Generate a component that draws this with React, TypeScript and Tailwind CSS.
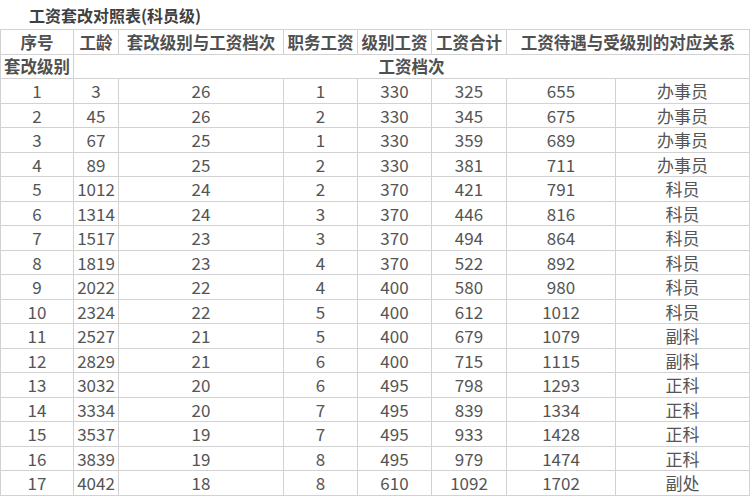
const rows: [number, string, number, number, number, number, number, string][] = [
  [1, "3", 26, 1, 330, 325, 655, "办事员"],
  [2, "45", 26, 2, 330, 345, 675, "办事员"],
  [3, "67", 25, 1, 330, 359, 689, "办事员"],
  [4, "89", 25, 2, 330, 381, 711, "办事员"],
  [5, "1012", 24, 2, 370, 421, 791, "科员"],
  [6, "1314", 24, 3, 370, 446, 816, "科员"],
  [7, "1517", 23, 3, 370, 494, 864, "科员"],
  [8, "1819", 23, 4, 370, 522, 892, "科员"],
  [9, "2022", 22, 4, 400, 580, 980, "科员"],
  [10, "2324", 22, 5, 400, 612, 1012, "科员"],
  [11, "2527", 21, 5, 400, 679, 1079, "副科"],
  [12, "2829", 21, 6, 400, 715, 1115, "副科"],
  [13, "3032", 20, 6, 495, 798, 1293, "正科"],
  [14, "3334", 20, 7, 495, 839, 1334, "正科"],
  [15, "3537", 19, 7, 495, 933, 1428, "正科"],
  [16, "3839", 19, 8, 495, 979, 1474, "正科"],
  [17, "4042", 18, 8, 610, 1092, 1702, "副处"],
];

const widths = [73, 45, 165, 74, 74, 75, 109, 134];
const cell = "border border-[#d2d2d2] p-0 text-center whitespace-nowrap";

export default function App() {
  return (
    <div
      className="h-[500px] w-[753px] overflow-hidden bg-white text-[#555]"
      style={{ fontFamily: '"Noto Sans CJK SC", "Noto Sans", sans-serif' }}
    >
      <div className="flex h-[29px] items-center pl-[29px] text-[16px] font-bold leading-none text-[#404040]">
        工资套改对照表(科员级)
      </div>
      <table className="w-[749px] table-fixed border-collapse text-[17px] leading-none">
        <colgroup>
          {widths.map((w, i) => (
            <col key={i} style={{ width: w }} />
          ))}
        </colgroup>
        <thead className="text-[16.5px] font-bold text-[#505050]">
          <tr className="h-[25px]">
            <th className={cell}>序号</th>
            <th className={cell}>工龄</th>
            <th className={cell}>套改级别与工资档次</th>
            <th className={cell}>职务工资</th>
            <th className={cell}>级别工资</th>
            <th className={cell}>工资合计</th>
            <th className={cell} colSpan={2}>
              工资待遇与受级别的对应关系
            </th>
          </tr>
          <tr className="h-[24px]">
            <th className={cell}>套改级别</th>
            <th className={cell} colSpan={7}>
              工资档次
            </th>
          </tr>
        </thead>
        <tbody>
          {rows.map((r) => (
            <tr key={r[0]} className="h-[24.5px]">
              {r.map((v, i) => (
                <td key={i} className={cell}>
                  {v}
                </td>
              ))}
            </tr>
          ))}
        </tbody>
      </table>
    </div>
  );
}
